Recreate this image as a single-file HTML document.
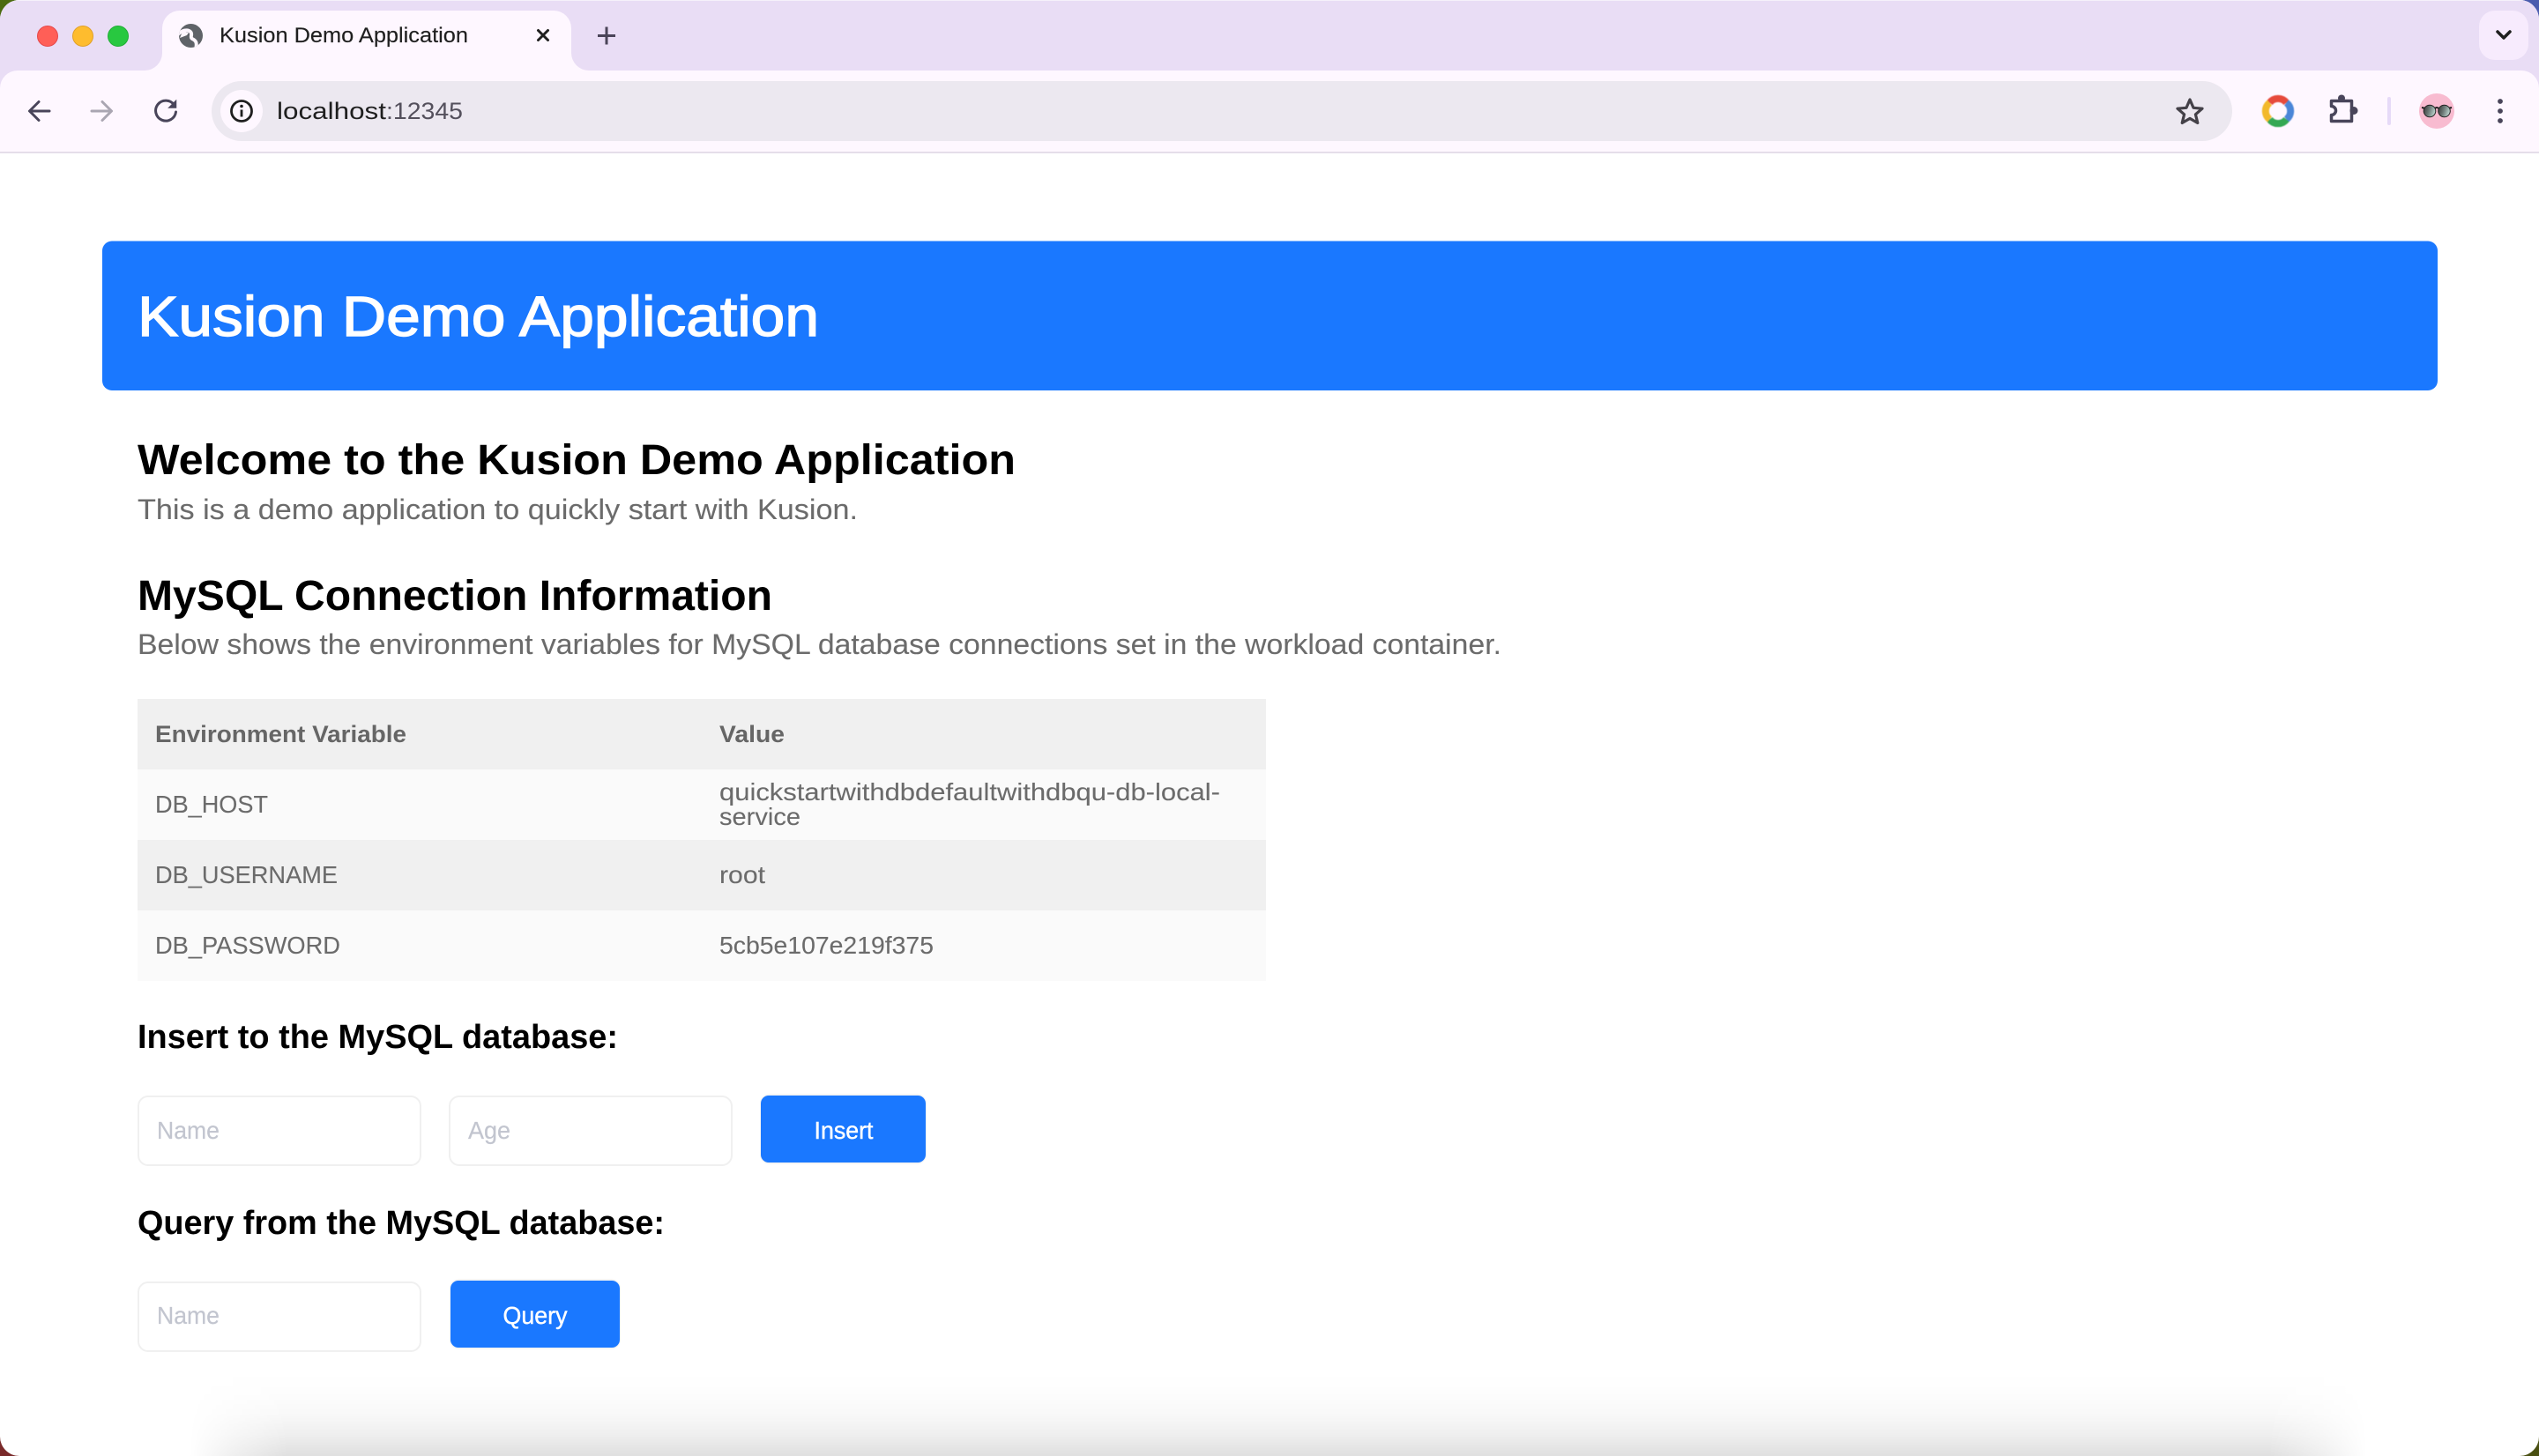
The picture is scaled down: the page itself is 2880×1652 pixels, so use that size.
<!DOCTYPE html>
<html lang="en">
<head>
<meta charset="utf-8">
<title>Kusion Demo Application</title>
<style>
html,body{margin:0;padding:0;background:#fff;width:2880px;height:1652px;overflow:hidden}
svg{display:block}
text{font-family:"Liberation Sans",sans-serif;}
.b{font-weight:700}
.g{stroke:#707070;stroke-width:.12px}
.ph{stroke:#c2c5cf;stroke-width:.2px}
.ic{fill:none;stroke-linecap:round;stroke-linejoin:round}
</style>
</head>
<body>
<svg xmlns="http://www.w3.org/2000/svg" width="2880" height="1652" viewBox="0 0 2880 1652">
<defs>
<clipPath id="win"><rect x="0" y="0" width="2880" height="1652" rx="22" ry="22"/></clipPath>
<clipPath id="globe"><circle cx="216.500" cy="40.500" r="13.500"/></clipPath>
<linearGradient id="lens" x1="0" y1="0" x2="1" y2="0.3"><stop offset="0" stop-color="#333"/><stop offset=".55" stop-color="#6f7d7a"/><stop offset="1" stop-color="#b4ccc6"/></linearGradient>
<linearGradient id="shV" gradientUnits="userSpaceOnUse" x1="0" y1="1556" x2="0" y2="1652">
<stop offset="0" stop-color="#000" stop-opacity="0"/>
<stop offset=".25" stop-color="#000" stop-opacity=".008"/>
<stop offset=".5" stop-color="#000" stop-opacity=".025"/>
<stop offset=".75" stop-color="#000" stop-opacity=".065"/>
<stop offset="1" stop-color="#000" stop-opacity=".125"/>
</linearGradient>
<linearGradient id="shH" gradientUnits="userSpaceOnUse" x1="215" y1="0" x2="2685" y2="0">
<stop offset="0" stop-color="#fff" stop-opacity="0"/>
<stop offset=".02" stop-color="#fff" stop-opacity=".5"/>
<stop offset=".045" stop-color="#fff" stop-opacity="1"/>
<stop offset=".955" stop-color="#fff" stop-opacity="1"/>
<stop offset=".98" stop-color="#fff" stop-opacity=".5"/>
<stop offset="1" stop-color="#fff" stop-opacity="0"/>
</linearGradient>
<mask id="shM" maskUnits="userSpaceOnUse" x="200" y="1552" width="2500" height="100"><rect x="200" y="1552" width="2500" height="100" fill="url(#shH)"/></mask>
</defs>

<!-- wallpaper corners -->
<rect x="0" y="0" width="30" height="30" fill="#4c6a10"/>
<rect x="2850" y="0" width="30" height="30" fill="#4a5cae"/>
<rect x="0" y="1622" width="30" height="30" fill="#7a2a2a"/>
<rect x="2850" y="1622" width="30" height="30" fill="#4a5012"/>

<g clip-path="url(#win)">
<rect width="2880" height="1652" fill="#fff"/>

<!-- tab strip -->
<rect width="2880" height="100" fill="#e9ddf5"/>
<rect width="2880" height="1" fill="#f6f1fa"/>
<!-- toolbar -->
<path d="M0 174V100A20 20 0 0 1 20 80H2860A20 20 0 0 1 2880 100V174Z" fill="#fef7ff"/>
<rect y="172" width="2880" height="2" fill="#e5deea"/>

<!-- traffic lights -->
<circle cx="54" cy="41" r="11.500" fill="#ff5f57" stroke="#e5484a" stroke-width="1"/>
<circle cx="94" cy="41" r="11.500" fill="#febc2e" stroke="#e0a028" stroke-width="1"/>
<circle cx="134" cy="41" r="11.500" fill="#28c840" stroke="#22ae36" stroke-width="1"/>

<!-- active tab -->
<path d="M164 80A20 20 0 0 0 184 60V32A20 20 0 0 1 204 12H628A20 20 0 0 1 648 32V60A20 20 0 0 0 668 80Z" fill="#fef7ff"/>
<circle cx="216.500" cy="40.500" r="13.500" fill="#5f6368"/>
<g clip-path="url(#globe)">
<path d="M201 40C206 34 213 33 216 36C219 39 215 42 218 44C222 46 224 48 222 56" class="ic" stroke="#fef7ff" stroke-width="4"/>
<path d="M204 43L212 40L214 37L207 36Z" fill="#fef7ff"/>
</g>
<text x="249" y="48" font-size="24" fill="#1f1f1f" stroke="#1f1f1f" stroke-width=".15" textLength="282" lengthAdjust="spacingAndGlyphs">Kusion Demo Application</text>
<path d="M610.500 34.500L621.500 45.500M621.500 34.500L610.500 45.500" class="ic" stroke="#1f1f1f" stroke-width="3"/>
<path d="M688 30.500V50.500M678 40.500H698" fill="none" stroke="#4a4458" stroke-width="3"/>

<!-- tab search -->
<rect x="2812" y="12" width="56" height="56" rx="18" fill="#f7ebfd"/>
<path d="M2833 36L2840 43L2847 36" class="ic" stroke="#1f1f1f" stroke-width="3.500"/>

<!-- nav icons -->
<path d="M56 126H34M44 115.500L33.500 126L44 136.500" class="ic" stroke="#49455a" stroke-width="3"/>
<path d="M104 126H126M116 115.500L126.500 126L116 136.500" class="ic" stroke="#aaa6b2" stroke-width="3"/>
<path d="M197.500 119A11.500 11.500 0 1 0 199.500 127" class="ic" stroke="#49455a" stroke-width="3"/>
<path d="M199.500 114.500V122H192Z" fill="#49455a" stroke="#49455a" stroke-width="1.500"/>

<!-- omnibox -->
<rect x="240" y="92" width="2292" height="68" rx="34" fill="#ece8f0"/>
<circle cx="274" cy="126" r="24" fill="#fef7ff"/>
<circle cx="274" cy="126" r="11.500" fill="none" stroke="#1f1f1f" stroke-width="2.800"/>
<rect x="272.600" y="124.500" width="2.800" height="8" fill="#1f1f1f"/>
<circle cx="274" cy="120.500" r="1.800" fill="#1f1f1f"/>
<text x="314" y="135" font-size="27" fill="#1f1f1f" textLength="124" lengthAdjust="spacingAndGlyphs">localhost</text>
<text x="438" y="135" font-size="27" fill="#54505c" textLength="87" lengthAdjust="spacingAndGlyphs">:12345</text>
<path d="M2484 113L2488 122.300L2498 123.200L2490.400 129.800L2492.800 139.500L2484 134.400L2475.200 139.500L2477.600 129.800L2470 123.200L2480 122.300Z" class="ic" stroke="#444148" stroke-width="3.200"/>

<!-- chrome ring -->
<g fill="none" stroke-width="8" style="filter:blur(.6px)">
<path d="M2574.500 116.500A12 12 0 0 1 2593.500 116.500" stroke="#e64a3b"/>
<path d="M2593.500 116.500A12 12 0 0 1 2593.500 135.500" stroke="#4a86d8"/>
<path d="M2593.500 135.500A12 12 0 0 1 2574.500 135.500" stroke="#34a853"/>
<path d="M2574.500 135.500A12 12 0 0 1 2574.500 116.500" stroke="#f2b92a"/>
</g>

<!-- extensions puzzle -->
<path d="M2644.500 114.500H2667.500V137.500H2644.500V130.500A5 5 0 0 0 2644.500 120.500Z" class="ic" stroke="#49455a" stroke-width="3.500"/>
<circle cx="2656" cy="111.500" r="4" fill="#49455a"/>
<circle cx="2670" cy="125.500" r="4.500" fill="#49455a"/>

<!-- divider -->
<rect x="2708" y="110" width="4" height="32" rx="2" fill="#e6daf8"/>

<!-- avatar -->
<circle cx="2764" cy="126" r="20" fill="#f8bbd0"/>
<path d="M2747 122L2751 123M2781 122L2777 123M2762 123Q2764 121 2766 123" fill="none" stroke="#1e1e1e" stroke-width="2"/>
<circle cx="2756" cy="126" r="6.800" fill="url(#lens)" stroke="#222" stroke-width="1"/>
<circle cx="2772.500" cy="126" r="6.800" fill="url(#lens)" stroke="#222" stroke-width="1"/>

<!-- menu -->
<circle cx="2836" cy="115" r="2.900" fill="#49455a"/>
<circle cx="2836" cy="126" r="2.900" fill="#49455a"/>
<circle cx="2836" cy="137" r="2.900" fill="#49455a"/>

<!-- page header -->
<rect x="116" y="273.500" width="2649" height="169.500" rx="11" fill="#1a78ff"/>
<text x="156" y="381" font-size="64" fill="#fff" stroke="#fff" stroke-width="1.400" textLength="773" lengthAdjust="spacingAndGlyphs">Kusion Demo Application</text>

<!-- headings -->
<text x="156" y="538" font-size="48" class="b" fill="#000" textLength="996" lengthAdjust="spacingAndGlyphs">Welcome to the Kusion Demo Application</text>
<text x="156" y="589" font-size="32" class="g" fill="#6b6b6b" textLength="817" lengthAdjust="spacingAndGlyphs">This is a demo application to quickly start with Kusion.</text>
<text x="156" y="692" font-size="48" class="b" fill="#000" textLength="720" lengthAdjust="spacingAndGlyphs">MySQL Connection Information</text>
<text x="156" y="742" font-size="32" class="g" fill="#6b6b6b" textLength="1547" lengthAdjust="spacingAndGlyphs">Below shows the environment variables for MySQL database connections set in the workload container.</text>

<!-- table -->
<rect x="156" y="793" width="1280" height="80" fill="#f0f0f0"/>
<rect x="156" y="873" width="1280" height="80" fill="#fafafa"/>
<rect x="156" y="953" width="1280" height="80" fill="#f0f0f0"/>
<rect x="156" y="1033" width="1280" height="80" fill="#fafafa"/>
<text x="176" y="842" font-size="27" class="b" fill="#666" textLength="285" lengthAdjust="spacingAndGlyphs">Environment Variable</text>
<text x="816" y="842" font-size="27" class="b" fill="#666" textLength="74" lengthAdjust="spacingAndGlyphs">Value</text>
<text x="176" y="922" font-size="28" class="g" fill="#6b6b6b" textLength="128" lengthAdjust="spacingAndGlyphs">DB_HOST</text>
<text x="816" y="908" font-size="28" class="g" fill="#6b6b6b" textLength="568" lengthAdjust="spacingAndGlyphs">quickstartwithdbdefaultwithdbqu-db-local-</text>
<text x="816" y="936" font-size="28" class="g" fill="#6b6b6b" textLength="92" lengthAdjust="spacingAndGlyphs">service</text>
<text x="176" y="1002" font-size="28" class="g" fill="#6b6b6b" textLength="207" lengthAdjust="spacingAndGlyphs">DB_USERNAME</text>
<text x="816" y="1002" font-size="28" class="g" fill="#6b6b6b" textLength="52" lengthAdjust="spacingAndGlyphs">root</text>
<text x="176" y="1082" font-size="28" class="g" fill="#6b6b6b" textLength="210" lengthAdjust="spacingAndGlyphs">DB_PASSWORD</text>
<text x="816" y="1082" font-size="28" class="g" fill="#6b6b6b" textLength="243" lengthAdjust="spacingAndGlyphs">5cb5e107e219f375</text>

<!-- insert form -->
<text x="156" y="1189" font-size="38" class="b" fill="#000" textLength="545" lengthAdjust="spacingAndGlyphs">Insert to the MySQL database:</text>
<rect x="157" y="1244" width="320" height="78" rx="11" fill="#fff" stroke="#f0f0f0" stroke-width="2"/>
<text x="178" y="1292" font-size="28" class="ph" fill="#c2c5cf" textLength="71" lengthAdjust="spacingAndGlyphs">Name</text>
<rect x="510" y="1244" width="320" height="78" rx="11" fill="#fff" stroke="#f0f0f0" stroke-width="2"/>
<text x="531" y="1292" font-size="28" class="ph" fill="#c2c5cf" textLength="48" lengthAdjust="spacingAndGlyphs">Age</text>
<rect x="862" y="1241" width="189" height="80" rx="11" fill="#f5f5f5"/>
<rect x="863" y="1243" width="187" height="76" rx="9" fill="#1a78ff"/>
<text x="923.500" y="1292" font-size="28" fill="#fff" stroke="#fff" stroke-width=".4" textLength="67" lengthAdjust="spacingAndGlyphs">Insert</text>

<!-- query form -->
<text x="156" y="1400" font-size="38" class="b" fill="#000" textLength="598" lengthAdjust="spacingAndGlyphs">Query from the MySQL database:</text>
<rect x="157" y="1455" width="320" height="78" rx="11" fill="#fff" stroke="#f0f0f0" stroke-width="2"/>
<text x="178" y="1502" font-size="28" class="ph" fill="#c2c5cf" textLength="71" lengthAdjust="spacingAndGlyphs">Name</text>
<rect x="510" y="1451" width="194" height="80" rx="11" fill="#f5f5f5"/>
<rect x="511" y="1453" width="192" height="76" rx="9" fill="#1a78ff"/>
<text x="570.500" y="1502" font-size="28" fill="#fff" stroke="#fff" stroke-width=".4" textLength="73" lengthAdjust="spacingAndGlyphs">Query</text>

<!-- bottom shadow -->
<rect x="200" y="1552" width="2500" height="100" fill="url(#shV)" mask="url(#shM)"/>
</g>
</svg>
</body>
</html>
